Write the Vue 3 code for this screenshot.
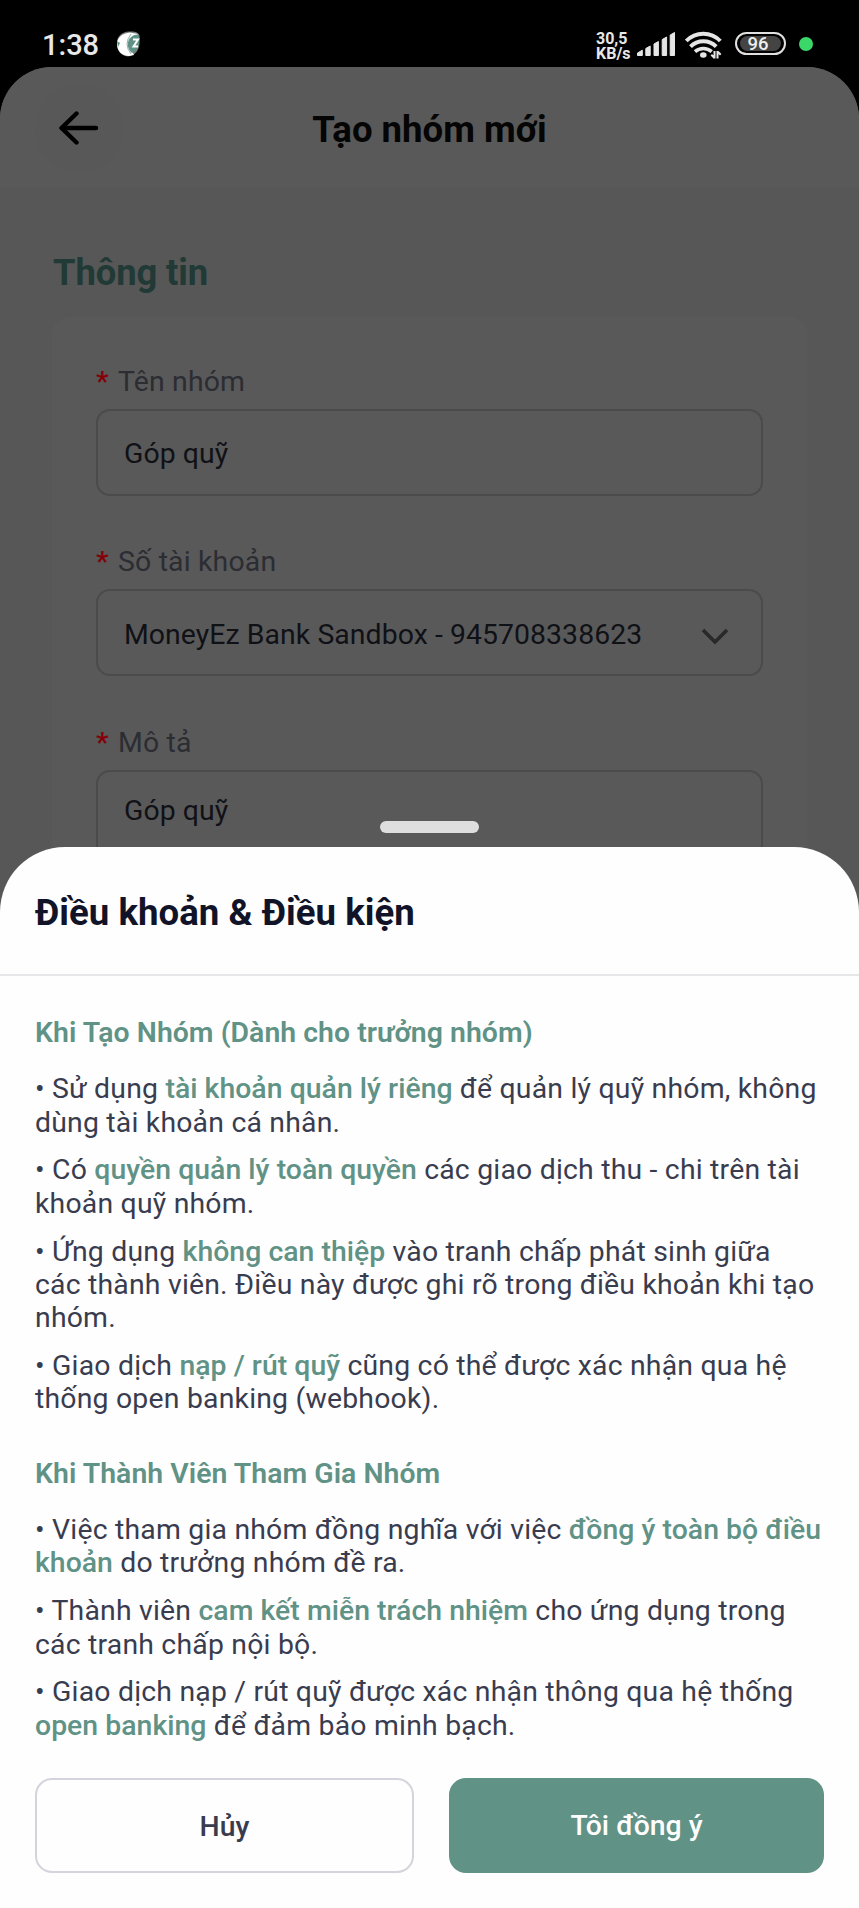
<script setup>
const sections = [
  {
    title: 'Khi Tạo Nhóm (Dành cho trưởng nhóm)',
    items: [
      [
        [['• Sử dụng '], ['tài khoản quản lý riêng', 1], [' để quản lý quỹ nhóm, không']],
        [['dùng tài khoản cá nhân.']]
      ],
      [
        [['• Có '], ['quyền quản lý toàn quyền', 1], [' các giao dịch thu - chi trên tài']],
        [['khoản quỹ nhóm.']]
      ],
      [
        [['• Ứng dụng '], ['không can thiệp', 1], [' vào tranh chấp phát sinh giữa']],
        [['các thành viên. Điều này được ghi rõ trong điều khoản khi tạo']],
        [['nhóm.']]
      ],
      [
        [['• Giao dịch '], ['nạp / rút quỹ', 1], [' cũng có thể được xác nhận qua hệ']],
        [['thống open banking (webhook).']]
      ]
    ]
  },
  {
    title: 'Khi Thành Viên Tham Gia Nhóm',
    items: [
      [
        [['• Việc tham gia nhóm đồng nghĩa với việc '], ['đồng ý toàn bộ điều', 1]],
        [['khoản', 1], [' do trưởng nhóm đề ra.']]
      ],
      [
        [['• Thành viên '], ['cam kết miễn trách nhiệm', 1], [' cho ứng dụng trong']],
        [['các tranh chấp nội bộ.']]
      ],
      [
        [['• Giao dịch nạp / rút quỹ được xác nhận thông qua hệ thống']],
        [['open banking', 1], [' để đảm bảo minh bạch.']]
      ]
    ]
  }
]
</script>

<template>
  <div class="phone">
    <div class="status">
      <span class="clock">1:38</span>
      <svg class="logo" width="24" height="26" viewBox="0 0 24 26">
        <path d="M1 12C1 5 6 1 13 .5 18 0 23 1 23.500 5V13C23 20 18 25 12 25.500 5 25 1 20 1 12Z" fill="#777b79" />
        <path d="M1 13C1 7 6 2 14 1.500L22 3 12 13 18 24 13 25C6 25 1 20 1 13Z" fill="#fff" />
        <path d="M15 3Q7 13 15 23" fill="none" stroke="#8fb3aa" stroke-width="1" />
        <path d="M23 3.500C12 3 8 15 16 22 21 19 23 15 23.300 10Z" fill="#5f9186" />
        <path d="M17 8.500H22L17.500 15.500H22" fill="none" stroke="#fff" stroke-width="2" />
        <path d="M1 10L4 12 2 16Z" fill="#5f9186" />
      </svg>
      <span class="spacer"></span>
      <div class="speed"><span>30,5</span><span>KB/s</span></div>
      <svg class="signal" width="38" height="25" viewBox="0 0 38 25" fill="#e6e6e6" stroke="#e6e6e6" stroke-width="1" stroke-linejoin="round">
        <path d="M.5 23.500V21L5.300 18.200V23.500Z" />
        <path d="M8.800 23.500V16.500L13.200 14V23.500Z" />
        <path d="M17 23.500V12L21.400 9.500V23.500Z" />
        <path d="M25.200 23.500V7.500L29.600 5V23.500Z" />
        <path d="M33.200 23.500V3L37.500 .500V23.500Z" />
      </svg>
      <svg class="wifi" width="38" height="28" viewBox="0 0 38 28" fill="none" stroke="#e6e6e6" stroke-width="3.900">
        <path d="M1.300 10A23.400 23.400 0 0 1 35.300 10" />
        <path d="M5.500 15.600A18.100 18.100 0 0 1 31.200 15.600" />
        <path d="M10 20.600A12.500 12.500 0 0 1 26.700 20.600" stroke-width="3.500" />
        <ellipse cx="18.300" cy="24" rx="3.300" ry="2.700" fill="#e6e6e6" stroke="none" />
        <path d="M29.500 20V27.500M29.500 27L26.300 23.800M32.500 27.500V20M32.500 20.500L35.700 23.700" stroke-width="2" />
      </svg>
      <div class="battery"><span>96</span></div>
      <i class="dot"></i>
    </div>

    <main class="screen">
      <header class="top">
        <div class="back">
          <svg width="40" height="34" viewBox="0 0 40 34" fill="none" stroke="#000" stroke-width="4.400" stroke-linecap="round" stroke-linejoin="round">
            <path d="M37 17H2.500M17.500 2.500L2.500 17L17.500 31.500" />
          </svg>
        </div>
        <h1><span>Tạo nhóm mới</span></h1>
      </header>
      <h2><span>Thông tin</span></h2>
      <section class="card">
        <label><b>*</b><span>Tên nhóm</span></label>
        <div class="field"><span>Góp quỹ</span></div>
        <label><b>*</b><span>Số tài khoản</span></label>
        <div class="field">
          <span>MoneyEz Bank Sandbox - 945708338623</span>
          <svg width="28" height="18" viewBox="0 0 28 18" fill="none" stroke="#292929" stroke-width="3.600">
            <path d="M2 2L14 14L26 2" />
          </svg>
        </div>
        <label><b>*</b><span>Mô tả</span></label>
        <div class="field area"><span>Góp quỹ</span></div>
      </section>
    </main>

    <div class="sheet">
      <i class="handle"></i>
      <div class="sheet-head"><span>Điều khoản &amp; Điều kiện</span></div>
      <div class="terms">
        <section v-for="s in sections" :key="s.title">
          <h3>{{ s.title }}</h3>
          <div v-for="(item, i) in s.items" :key="i" class="item">
            <p v-for="(line, k) in item" :key="k"><span v-for="(part, j) in line" :key="j" :class="{ strong: part[1] }">{{ part[0] }}</span></p>
          </div>
        </section>
      </div>
      <div class="actions">
        <button class="cancel">Hủy</button>
        <button class="agree">Tôi đồng ý</button>
      </div>
    </div>
  </div>
</template>

<style>
body { background: #000; }
</style>

<style scoped>
* { box-sizing: border-box; margin: 0; }
.phone {
  position: relative; width: 859px; height: 1908px; overflow: hidden;
  background: #000; font-family: Roboto, "Noto Sans", sans-serif; font-size: 28.4px;
  line-height: 33.3px; display: flex; flex-direction: column;
}
.status { height: 67px; flex: none; display: flex; padding: 0 46px 0 42px; color: #e8e8e8; align-items: flex-start; }
.clock { font-size: 29px; font-weight: 500; line-height: 34px; margin-top: 28px; width: 60px; white-space: nowrap; }
.logo { margin: 31px 0 0 14px; }
.spacer { flex: 1; }
.speed { display: flex; flex-direction: column; font-size: 16px; font-weight: 700; line-height: 15px; margin: 31px 7px 0 0; width: 34px; white-space: nowrap; }
.signal { margin: 32px 10px 0 0; }
.wifi { margin: 31px 12px 0 0; }
.battery {
  width: 51px; height: 23px; margin: 32px 13px 0 0; border: 2px solid #e0e0e0; border-radius: 12px;
  padding: 2px 3px; color: #eee; font-size: 18.500px; font-weight: 500; line-height: 16px; text-align: center;
}
.battery span { display: block; background: #444; border-radius: 8px; height: 15px; padding-right: 5px; }
.dot { width: 14px; height: 14px; border-radius: 50%; background: #3bd768; margin-top: 37px; }
.screen { flex: 1; background: #575757; border-radius: 52px 52px 0 0; overflow: hidden; }
.top { height: 121px; background: #595959; display: grid; grid-template-columns: 35px 88px 1fr 123px; align-items: center; border-bottom: 1px solid #575757; }
.back { grid-column: 2; width: 88px; height: 88px; border-radius: 50%; background: #585858; display: flex; align-items: center; justify-content: center; margin-top: 1px; }
h1 { font-size: 36.600px; font-weight: 700; line-height: 44px; color: #050505; text-align: center; padding-top: 5px; }
h2 { font-size: 36.400px; font-weight: 700; line-height: 44px; color: #213a36; margin: 63px 0 0 53px; height: 66px; letter-spacing: -.1px; }
.card { margin: 0 52px; height: 700px; background: #595959; border-radius: 17px; padding: 48px 44px 0 44px; }
label { display: flex; height: 44px; gap: 10px; color: #2b2d33; letter-spacing: .18px; }
label b { font-weight: 500; color: #850008; width: 12px; }
.field { height: 87px; border: 2px solid #4b4b4c; border-radius: 14px; padding: 3px 32px 0 26px; margin-bottom: 49.400px; display: flex; align-items: center; justify-content: space-between; color: #101116; letter-spacing: .07px; }
.field svg { margin-top: 6px; }
.area { height: 240px; align-items: flex-start; padding-top: 22px; }
.sheet { position: absolute; left: 0; right: 0; top: 847px; bottom: 0; background: #fefefe; border-radius: 65px 65px 0 0; display: flex; flex-direction: column; }
.handle { position: absolute; left: 380px; top: -26px; width: 99px; height: 12px; border-radius: 6px; background: #dedede; }
.sheet-head { height: 129px; border-bottom: 2px solid #e6e6e8; padding: 44px 35px 0; font-size: 36.600px; line-height: 44px; font-weight: 700; color: #111428; letter-spacing: .03px; }
.terms { padding: 40px 35px 0; height: 802px; color: #393c4e; }
h3 { font-size: 28.4px; font-weight: 600; line-height: 33.3px; color: #609286; margin-bottom: 23px; letter-spacing: .04px; }
p { white-space: pre; letter-spacing: .2px; }
.item { margin-bottom: 14.600px; }
section + section { margin-top: 41px; }
.strong { color: #609286; font-weight: 500; letter-spacing: .03px; }
.actions { display: grid; grid-template-columns: 379px 375px; gap: 35px; padding: 0 35px; }
button { height: 95px; border-radius: 17px; border: 2px solid #d4d4dc; background: #fefefe; font: 500 28.4px/34px Roboto, sans-serif; color: #393c4e; }
.cancel { padding-top: 3px; }
.agree { background: #609286; border: 0; color: #fefefe; }
</style>
